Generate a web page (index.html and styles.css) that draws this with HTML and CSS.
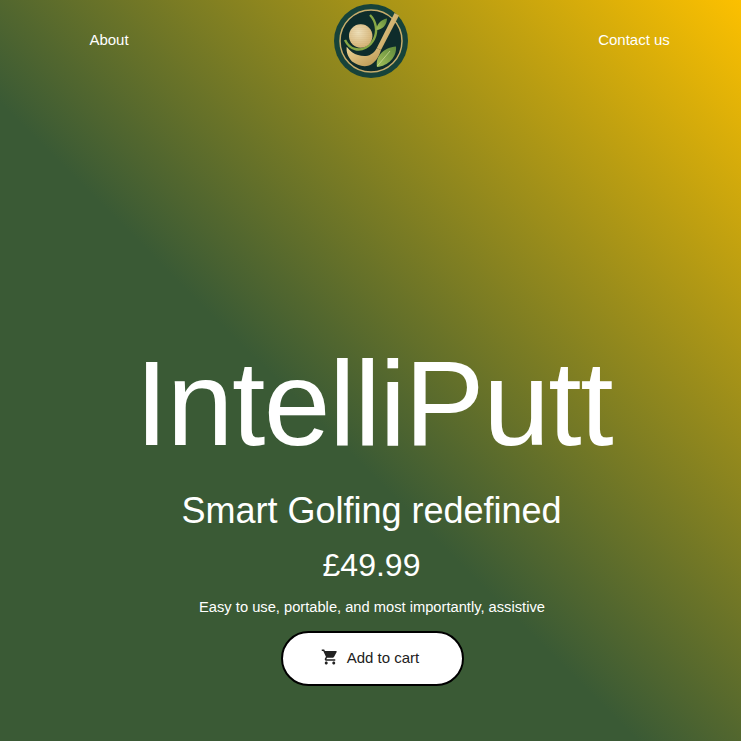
FILE: index.html
```html
<!DOCTYPE html>
<html lang="en">

<head>
    <meta charset="UTF-8">
    <meta name="viewport" content="width=device-width, initial-scale=1.0">
    <title>IntelliPutt</title>
    <link rel="stylesheet" href="styles.css">
</head>

<body>
    <nav class="nav">
        <a class="nav-link nav-about" href="#">About</a>
        <svg class="logo" viewBox="0 0 74 74" role="img" aria-label="IntelliPutt logo">
            <defs>
                <linearGradient id="gold" x1="0" y1="0" x2="1" y2="1">
                    <stop offset="0" stop-color="#ecd597" />
                    <stop offset="1" stop-color="#b8924c" />
                </linearGradient>
                <radialGradient id="ball" cx="0.4" cy="0.35" r="0.75">
                    <stop offset="0" stop-color="#f7ecc8" />
                    <stop offset="1" stop-color="#d8b372" />
                </radialGradient>
                <pattern id="dimples" width="2" height="2" patternUnits="userSpaceOnUse">
                    <circle cx="1" cy="1" r="0.55" fill="#a8824a" />
                </pattern>
                <linearGradient id="leaf" x1="0" y1="1" x2="1" y2="0">
                    <stop offset="0" stop-color="#a3c05a" />
                    <stop offset="1" stop-color="#5f8a3a" />
                </linearGradient>
            </defs>
            <circle cx="37" cy="37" r="37" fill="#17433a" />
            <circle cx="37" cy="37" r="31" fill="#0e2c2b" stroke="#c7ad6c" stroke-width="1.5" />
            <path d="M36 11 C42 17 44 27 40 35 C36 43 28 47 21 45 C16 44 13 40 11 36" fill="none" stroke="#86a745" stroke-width="2.4" />
            <path d="M42.5 26 C42.5 20 47 15.5 53 14.5 C53 21 48 26 42.5 26 Z" fill="url(#leaf)" />
            <circle cx="26.7" cy="32" r="11.7" fill="url(#ball)" />
            <circle cx="26.7" cy="32" r="11.7" fill="url(#dimples)" opacity="0.7" />
            <path d="M60.5 9 L65 11.5 L47 46 L42.7 44.3 Z" fill="url(#gold)" />
            <path d="M12.7 42.7 C16 47 20 50 24 51 C30 53 38 53 42.7 44.3 L47 46 C45 53 41 59 35 61.5 C29 63.5 23 61 18 57.5 C14 53 12 48 12.7 42.7 Z" fill="url(#gold)" />
            <path d="M43 63 C41 52 50 43.5 62 42.5 C63 53 54 62 43 63 Z" fill="url(#leaf)" />
            <path d="M43.3 62 L56 47" fill="none" stroke="#e0e6a8" stroke-width="0.6" />
        </svg>
        <a class="nav-link" href="#">Contact us</a>
    </nav>

    <main class="hero">
        <h1 class="title">IntelliPutt</h1>
        <h2 class="tagline">Smart Golfing redefined</h2>
        <p class="price">£49.99</p>
        <p class="blurb">Easy to use, portable, and most importantly, assistive</p>
        <button class="cart-btn" type="button">
            <svg class="cart-icon" viewBox="0 0 24 24">
                <path d="M7 18c-1.1 0-1.99.9-1.99 2S5.9 22 7 22s2-.9 2-2-.9-2-2-2zM1 2v2h2l3.6 7.59-1.35 2.45c-.16.28-.25.61-.25.96 0 1.1.9 2 2 2h12v-2H7.42c-.14 0-.25-.11-.25-.25l.03-.12.9-1.63h7.45c.75 0 1.41-.41 1.75-1.03l3.58-6.49c.08-.14.12-.31.12-.48 0-.55-.45-1-1-1H5.21l-.94-2H1zm16 16c-1.1 0-1.99.9-1.99 2s.89 2 1.99 2 2-.9 2-2-.9-2-2-2z" />
            </svg>
            Add to cart
        </button>
    </main>
</body>

</html>
```

FILE: styles.css
```css
* {
    margin: 0;
    padding: 0;
    box-sizing: border-box;
}

body {
    width: 741px;
    height: 741px;
    overflow: hidden;
    display: flex;
    flex-direction: column;
    font-family: "Liberation Sans", Arial, sans-serif;
    color: white;
    background: linear-gradient(45deg, #3a5a35 43%, #fcc000 100%);
}

.nav {
    display: flex;
    justify-content: space-between;
    align-items: center;
    padding: 4px 67px 0 68px;
}

.nav-link {
    width: 80px;
    text-align: center;
    color: white;
    text-decoration: none;
    font-size: 15px;
    margin-bottom: 3px;
}

.nav-about {
    padding-left: 2px;
}

.logo {
    width: 74px;
    height: 74px;
    display: block;
}

.hero {
    flex: 1;
    display: flex;
    flex-direction: column;
    align-items: center;
    justify-content: flex-end;
    padding-bottom: 55px;
}

.title {
    font-size: 120px;
    font-weight: 400;
    letter-spacing: -1.5px;
    line-height: 133px;
    margin-left: 6px;
}

.tagline {
    font-size: 36px;
    font-weight: 400;
    line-height: 41px;
    margin-top: 20px;
    margin-left: 2px;
}

.price {
    font-size: 32px;
    line-height: 37px;
    margin-top: 16px;
    margin-left: 2px;
}

.blurb {
    font-size: 14.7px;
    line-height: 17px;
    margin-top: 15px;
    margin-left: 3px;
}

.cart-btn {
    display: flex;
    align-items: center;
    justify-content: center;
    gap: 8px;
    width: 183px;
    height: 55px;
    margin-top: 15px;
    margin-left: 4px;
    padding: 0 5px 3px 0;
    border: 2px solid black;
    border-radius: 28px;
    background: white;
    color: #212121;
    font-family: inherit;
    font-size: 15px;
}

.cart-icon {
    width: 18px;
    height: 18px;
    fill: #212121;
}
```
